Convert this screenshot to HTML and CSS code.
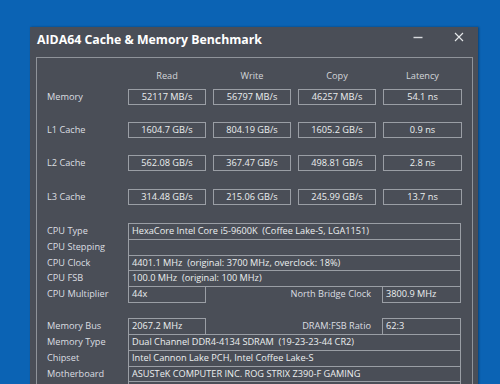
FILE: index.html
```html
<!DOCTYPE html>
<html>
<head>
<meta charset="utf-8">
<link rel="stylesheet" href="styles.css">
</head>
<body>
<div class="window">
  <div class="titlebar">
    <div class="title">AIDA64 Cache &amp; Memory Benchmark</div>
    <div class="controls">
      <svg class="ctl" width="10" height="10" viewBox="0 0 10 10"><line x1="0.5" y1="5.5" x2="9.5" y2="5.5" stroke="#d8dade" stroke-width="1.4"/></svg>
      <svg class="ctl" width="10" height="10" viewBox="0 0 10 10"><path d="M1 1 L9 9 M9 1 L1 9" stroke="#e6e8ea" stroke-width="1.1" fill="none"/></svg>
    </div>
  </div>
  <div class="panel">
    <div class="heads">
      <div></div>
      <div class="head">Read</div>
      <div class="head">Write</div>
      <div class="head">Copy</div>
      <div class="head">Latency</div>
    </div>
    <div class="bench">
      <div class="lbl">Memory</div>
      <div class="bbox">52117 MB/s</div>
      <div class="bbox">56797 MB/s</div>
      <div class="bbox">46257 MB/s</div>
      <div class="bbox">54.1 ns</div>

      <div class="lbl">L1 Cache</div>
      <div class="bbox">1604.7 GB/s</div>
      <div class="bbox">804.19 GB/s</div>
      <div class="bbox">1605.2 GB/s</div>
      <div class="bbox">0.9 ns</div>

      <div class="lbl">L2 Cache</div>
      <div class="bbox">562.08 GB/s</div>
      <div class="bbox">367.47 GB/s</div>
      <div class="bbox">498.81 GB/s</div>
      <div class="bbox">2.8 ns</div>

      <div class="lbl">L3 Cache</div>
      <div class="bbox">314.48 GB/s</div>
      <div class="bbox">215.06 GB/s</div>
      <div class="bbox">245.99 GB/s</div>
      <div class="bbox">13.7 ns</div>
    </div>

    <div class="info">
      <div class="row"><div class="lbl">CPU Type</div><div class="val wide">HexaCore Intel Core i5-9600K&nbsp; (Coffee Lake-S, LGA1151)</div></div>
      <div class="row"><div class="lbl">CPU Stepping</div><div class="val wide"></div></div>
      <div class="row"><div class="lbl">CPU Clock</div><div class="val wide">4401.1 MHz&nbsp; (original: 3700 MHz, overclock: 18%)</div></div>
      <div class="row"><div class="lbl">CPU FSB</div><div class="val wide">100.0 MHz&nbsp; (original: 100 MHz)</div></div>
      <div class="row"><div class="lbl">CPU Multiplier</div><div class="val short">44x</div><div class="rlbl">North Bridge Clock</div><div class="val short">3800.9 MHz</div></div>
    </div>

    <div class="info second">
      <div class="row"><div class="lbl">Memory Bus</div><div class="val short">2067.2 MHz</div><div class="rlbl">DRAM:FSB Ratio</div><div class="val short">62:3</div></div>
      <div class="row"><div class="lbl">Memory Type</div><div class="val wide">Dual Channel DDR4-4134 SDRAM&nbsp; (19-23-23-44 CR2)</div></div>
      <div class="row"><div class="lbl">Chipset</div><div class="val wide">Intel Cannon Lake PCH, Intel Coffee Lake-S</div></div>
      <div class="row"><div class="lbl">Motherboard</div><div class="val wide">ASUSTeK COMPUTER INC. ROG STRIX Z390-F GAMING</div></div>
      <div class="row"><div class="lbl"></div><div class="val wide"></div></div>
    </div>
  </div>
</div>
</body>
</html>
```

FILE: styles.css
```css
html, body {
  margin: 0;
  padding: 0;
}
body {
  width: 500px;
  height: 384px;
  overflow: hidden;
  background: #0b63b4;
  font-family: "Open Sans", "Noto Sans", sans-serif;
  font-size: 9.2px;
  color: #dcdee2;
}
.window {
  margin: 27px 0 0 30px;
  width: 448px;
  height: 400px;
  background: #4a4e57;
  box-shadow: 1px 0 2px rgba(0,0,0,0.35);
}
.titlebar {
  height: 24px;
  display: flex;
  align-items: center;
  justify-content: space-between;
  padding-left: 7px;
}
.title {
  font-weight: bold;
  font-size: 12.3px;
  color: #ffffff;
}
.controls {
  display: flex;
  gap: 31px;
  margin-right: 14px;
  margin-top: -5px;
}
.ctl {
  display: block;
}
.panel {
  margin: 6px 5px 0 6px;
  border: 1px solid #8f939a;
  height: 360px;
  padding: 10px 0 0 10px;
  box-sizing: border-box;
}
.heads,
.bench {
  display: grid;
  grid-template-columns: 74px 78px 78px 78px 79px;
  column-gap: 7px;
}
.heads {
  height: 16px;
  margin-bottom: 5px;
}
.bench {
  grid-auto-rows: 16px;
  row-gap: 17.2px;
}
.head {
  text-align: center;
  color: #d4d6da;
  line-height: 16px;
}
.lbl {
  line-height: 16px;
  color: #dcdee2;
  white-space: nowrap;
}
.bbox {
  border: 1px solid #9a9ea5;
  box-sizing: border-box;
  height: 16px;
  line-height: 14px;
  text-align: center;
  color: #eceef0;
  white-space: nowrap;
}
.info {
  margin-top: 18.5px;
  display: flex;
  flex-direction: column;
}
.info.second {
  margin-top: 16.5px;
}
.row {
  display: grid;
  grid-template-columns: 81px 78px 1fr 79px;
  height: 16.75px;
  margin-bottom: -1px;
  width: 414px;
}
.val {
  border: 1px solid #9a9ea5;
  box-sizing: border-box;
  height: 16.75px;
  line-height: 14.5px;
  padding-left: 3px;
  color: #eceef0;
  white-space: nowrap;
  overflow: hidden;
}
.val.wide {
  grid-column: 2 / 5;
}
.rlbl {
  text-align: right;
  padding-right: 11px;
  line-height: 16.5px;
  white-space: nowrap;
}
```
